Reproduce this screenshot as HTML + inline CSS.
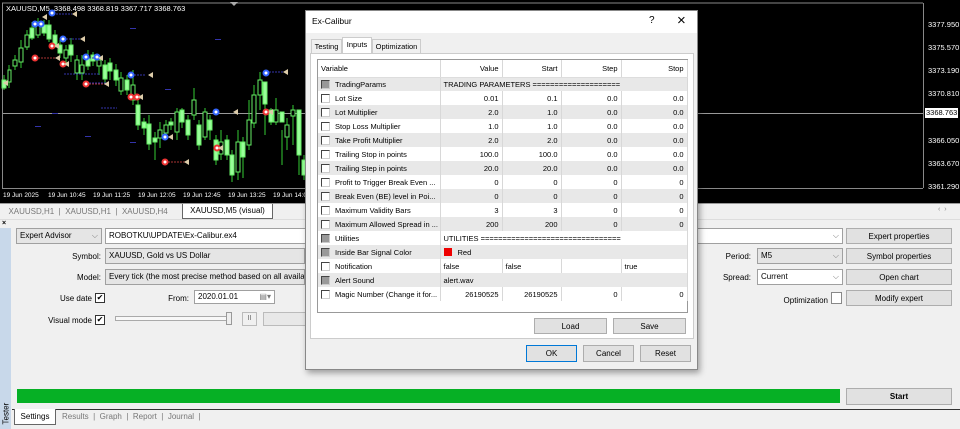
<!DOCTYPE html>
<html><head><meta charset="utf-8"><style>
*{margin:0;padding:0;box-sizing:border-box}
body{width:960px;height:429px;overflow:hidden;background:#f0f0f0;font-family:"Liberation Sans",sans-serif;font-size:8px;color:#000;position:relative}
.a{position:absolute}
.w{color:#fff}
.box{position:absolute;border:1px solid #a0a0a0;background:#fff;padding:2px 3px;white-space:nowrap;overflow:hidden}
.btn{position:absolute;border:1px solid #adadad;background:#e1e1e1;text-align:center;line-height:15px}
.cb{position:absolute;width:10px;height:10px;border:1px solid #333;background:#fff;font-size:8px;line-height:8px;text-align:center}
.lbl{position:absolute;text-align:right;white-space:nowrap}
table{border-collapse:collapse;position:absolute;left:318px;top:60px;width:369px;table-layout:fixed}
td{height:14px;border-right:1px solid #d8d8d8;padding:0 3px;white-space:nowrap;overflow:hidden;font-size:7.5px;line-height:13px}
td.r{text-align:right}
tr.g td{background:#e8e8e8}
.ck{display:inline-block;width:9px;height:9px;border:1px solid #444;border-right-color:#ccc;border-bottom-color:#ccc;vertical-align:-2px;margin-right:5px;background:#fff}
.ck.d{background:#999}
.px{position:absolute;left:928px;color:#fff;font-size:7.5px;line-height:9px}
.tx{position:absolute;top:192px;color:#fff;font-size:6.5px;white-space:nowrap}
</style></head><body>
<div class="a" style="left:0;top:0;width:960px;height:203px;background:#000"></div>
<svg class="a" style="left:0;top:0" width="960" height="203">
<line x1="2" y1="3" x2="923" y2="3" stroke="#888"/>
<line x1="2.5" y1="3" x2="2.5" y2="188" stroke="#888"/>
<line x1="923.5" y1="3" x2="923.5" y2="188" stroke="#888"/>
<line x1="2" y1="188.5" x2="923" y2="188.5" stroke="#888"/>
<line x1="3" y1="113.5" x2="923" y2="113.5" stroke="#999"/>
<g stroke="#3c3" stroke-width="1">
<path d="M4 75V90M9 65V88M15 55V70M21 40V68M27 30V50M32 22V40M38 18V38M44 20V36M49 20V42M55 30V48M60 40V58M66 45V65M71 38V62M77 55V80M82 55V80M88 50V70M93 52V66M99 55V75M105 60V83M110 58V80M116 64V86M121 72V95M127 75V95M133 70V105M138 100V130M144 118V135M149 115V150M155 132V160M160 122V148M166 120V140M171 118V130M177 108V140M182 108V128M188 115V140M194 88V120M199 120V150M205 108V140M210 115V140M216 135V165M221 130V160M227 135V160M232 150V182M238 130V180M243 137V178M249 100V150M254 85V128M260 72V110M265 100V135M271 108V125M276 98V125M282 130V165M287 118V150M293 105V145M299 130V175M304 155V180"/>
</g>
<g fill="#9f9" stroke="#6e6">
<rect x="2" y="80" width="4" height="8"/><rect x="8" y="70" width="3" height="12" fill="#000"/><rect x="13" y="60" width="4" height="6" fill="#000"/><rect x="19" y="48" width="4" height="14" fill="#000"/><rect x="25" y="35" width="4" height="12" fill="#000"/><rect x="30" y="28" width="4" height="10"/><rect x="36" y="23" width="4" height="12" fill="#000"/><rect x="42" y="25" width="4" height="8"/><rect x="47" y="25" width="4" height="14"/><rect x="53" y="35" width="4" height="10"/><rect x="58" y="45" width="4" height="8"/><rect x="64" y="50" width="4" height="8" fill="#000"/><rect x="69" y="45" width="4" height="10"/><rect x="75" y="60" width="4" height="13" fill="#000"/><rect x="80" y="65" width="4" height="8" fill="#000"/><rect x="86" y="58" width="4" height="8"/><rect x="91" y="55" width="4" height="6"/><rect x="97" y="60" width="4" height="6" fill="#000"/><rect x="103" y="65" width="4" height="14"/><rect x="108" y="63" width="4" height="8"/><rect x="114" y="70" width="4" height="10"/><rect x="119" y="78" width="4" height="13" fill="#000"/><rect x="125" y="80" width="4" height="10"/><rect x="131" y="85" width="4" height="15" fill="#000"/><rect x="136" y="105" width="4" height="20"/><rect x="142" y="122" width="4" height="6"/><rect x="147" y="124" width="4" height="20"/><rect x="153" y="138" width="4" height="4"/><rect x="158" y="130" width="4" height="8" fill="#000"/><rect x="164" y="125" width="4" height="8" fill="#000"/><rect x="169" y="122" width="4" height="3"/><rect x="175" y="112" width="4" height="20" fill="#000"/><rect x="180" y="110" width="4" height="12"/><rect x="186" y="120" width="4" height="15"/><rect x="192" y="100" width="4" height="15" fill="#000"/><rect x="197" y="125" width="4" height="20"/><rect x="203" y="112" width="4" height="25" fill="#000"/><rect x="208" y="120" width="4" height="10"/><rect x="214" y="140" width="4" height="20"/><rect x="219" y="142" width="4" height="12" fill="#000"/><rect x="225" y="140" width="4" height="15"/><rect x="230" y="155" width="4" height="20"/><rect x="236" y="142" width="4" height="30" fill="#000"/><rect x="241" y="142" width="4" height="15"/><rect x="247" y="120" width="4" height="25" fill="#000"/><rect x="252" y="95" width="4" height="28" fill="#000"/><rect x="258" y="80" width="4" height="15" fill="#000"/><rect x="263" y="82" width="4" height="22"/><rect x="269" y="110" width="4" height="12"/><rect x="274" y="110" width="4" height="12" fill="#000"/><rect x="280" y="112" width="4" height="10"/><rect x="285" y="125" width="4" height="12" fill="#000"/><rect x="291" y="110" width="4" height="6" fill="#000"/><rect x="297" y="110" width="4" height="45"/><rect x="302" y="160" width="4" height="15"/>
</g>
<g fill="none" stroke-dasharray="2,1">
<path d="M53 14H72M63 39H84M86 58H98M131 75H146M64 74H100M86 83H106M101 108H117M263 72H286" stroke="#33a"/>
<path d="M35 58H56M86 84H106M165 162H186" stroke="#a33"/>
</g>
<g fill="#fff" stroke="#36f" stroke-width="2"><circle cx="35" cy="24" r="2.5"/><circle cx="41" cy="24" r="2.5"/><circle cx="52" cy="13" r="2.5"/><circle cx="63" cy="39" r="2.5"/><circle cx="86" cy="57" r="2.5"/><circle cx="97" cy="57" r="2.5"/><circle cx="131" cy="75" r="2.5"/><circle cx="165" cy="137" r="2.5"/><circle cx="216" cy="112" r="2.5"/><circle cx="266" cy="73" r="2.5"/></g>
<g fill="#fff" stroke="#e33" stroke-width="2"><circle cx="35" cy="58" r="2.5"/><circle cx="52" cy="46" r="2.5"/><circle cx="63" cy="64" r="2.5"/><circle cx="86" cy="84" r="2.5"/><circle cx="131" cy="97" r="2.5"/><circle cx="137" cy="97" r="2.5"/><circle cx="165" cy="162" r="2.5"/><circle cx="217" cy="148" r="2.5"/><circle cx="266" cy="112" r="2.5"/></g>
<g fill="#dca"><path d="M42 17l5-3v6zM72 14l5-3v6zM80 39l5-3v6zM98 58l5-3v6zM54 46l5-3v6zM55 58l5-3v6zM64 64l5-3v6zM104 84l5-3v6zM148 75l5-3v6zM138 97l5-3v6zM3 83l5-3v6zM168 137l5-3v6zM184 162l5-3v6zM233 112l5-3v6zM218 148l5-3v6zM283 72l5-3v6zM268 112l5-3v6z"/></g>
<g fill="#33a"><rect x="130" y="28" width="6" height="1"/><rect x="215" y="39" width="6" height="1"/><rect x="165" y="89" width="6" height="1"/><rect x="52" y="113" width="6" height="1"/><rect x="35" y="126" width="6" height="1"/><rect x="85" y="136" width="6" height="1"/><rect x="130" y="142" width="6" height="1"/></g>
<path d="M44 0l4 4 4-4" fill="#aaa" transform="translate(186,2)"/>
</svg>
<div class="a w" style="left:6px;top:4px;font-size:7.5px;white-space:nowrap">XAUUSD,M5 &nbsp;3368.498 3368.819 3367.717 3368.763</div>
<div class="px" style="top:20px">3377.950</div>
<div class="px" style="top:43px">3375.570</div>
<div class="px" style="top:66px">3373.190</div>
<div class="px" style="top:89px">3370.810</div>
<div class="a" style="left:925px;top:108px;font-size:7.5px;background:#fff;padding:0 1px;line-height:10px">3368.763</div>
<div class="px" style="top:136px">3366.050</div>
<div class="px" style="top:159px">3363.670</div>
<div class="px" style="top:182px">3361.290</div>
<div class="tx" style="left:3px">19 Jun 2025</div>
<div class="tx" style="left:48px">19 Jun 10:45</div>
<div class="tx" style="left:93px">19 Jun 11:25</div>
<div class="tx" style="left:138px">19 Jun 12:05</div>
<div class="tx" style="left:183px">19 Jun 12:45</div>
<div class="tx" style="left:228px">19 Jun 13:25</div>
<div class="tx" style="left:273px">19 Jun 14:05</div>

<div class="a" style="left:0;top:203px;width:960px;height:1px;background:#999"></div>
<div class="a" style="left:4px;top:207px;color:#777;white-space:nowrap">&nbsp;&nbsp;XAUUSD,H1 &nbsp;| &nbsp;XAUUSD,H1 &nbsp;| &nbsp;XAUUSD,H4</div>
<div class="a" style="left:182px;top:204px;width:91px;height:15px;background:#fff;border:1px solid #666;border-top:none;text-align:center;line-height:13px">XAUUSD,M5 (visual)</div>
<div class="a" style="left:938px;top:206px;color:#888;font-size:7px">‹ &nbsp;›</div>
<div class="a" style="left:0;top:219px;width:960px;height:1px;background:#ddd"></div>
<div class="a" style="left:2px;top:220px;font-size:7px;font-weight:bold">×</div>
<div class="a" style="left:0;top:228px;width:11px;height:201px;background:#c8d8ea"></div>
<div class="a" style="left:-6px;top:408px;transform:rotate(-90deg);font-size:8px;width:24px">Tester</div>

<div class="box" style="left:16px;top:228px;width:86px;height:16px;background:#e5e5e5">Expert Advisor<span style="float:right;color:#777">⌵</span></div>
<div class="box" style="left:105px;top:228px;width:738px;height:16px">ROBOTKU\UPDATE\Ex-Calibur.ex4<span style="float:right;color:#777">⌵</span></div>
<div class="btn" style="left:846px;top:228px;width:106px;height:16px">Expert properties</div>
<div class="lbl" style="left:40px;top:252px;width:61px">Symbol:</div>
<div class="box" style="left:105px;top:248px;width:200px;height:16px;background:#e5e5e5">XAUUSD, Gold vs US Dollar</div>
<div class="lbl" style="left:700px;top:252px;width:51px">Period:</div>
<div class="box" style="left:757px;top:248px;width:86px;height:16px;background:#e5e5e5">M5<span style="float:right;color:#777">⌵</span></div>
<div class="btn" style="left:846px;top:248px;width:106px;height:16px">Symbol properties</div>
<div class="lbl" style="left:40px;top:273px;width:61px">Model:</div>
<div class="box" style="left:105px;top:269px;width:200px;height:16px;background:#e5e5e5">Every tick (the most precise method based on all available le</div>
<div class="lbl" style="left:700px;top:273px;width:51px">Spread:</div>
<div class="box" style="left:757px;top:269px;width:86px;height:16px">Current<span style="float:right;color:#777">⌵</span></div>
<div class="btn" style="left:846px;top:269px;width:106px;height:16px">Open chart</div>
<div class="lbl" style="left:40px;top:294px;width:52px">Use date</div>
<div class="cb" style="left:95px;top:293px">✔</div>
<div class="lbl" style="left:150px;top:294px;width:39px">From:</div>
<div class="box" style="left:194px;top:290px;width:81px;height:14px;padding:1px 3px">2020.01.01<span style="float:right;color:#777">▤▾</span></div>
<div class="lbl" style="left:760px;top:296px;width:68px">Optimization</div>
<div class="cb" style="left:831px;top:292px;width:11px;height:12px;border-color:#888"></div>
<div class="btn" style="left:846px;top:290px;width:106px;height:16px">Modify expert</div>
<div class="lbl" style="left:30px;top:316px;width:62px">Visual mode</div>
<div class="cb" style="left:95px;top:315px">✔</div>
<div class="a" style="left:115px;top:316px;width:115px;height:5px;border:1px solid #aaa;background:#f8f8f8"></div>
<div class="a" style="left:226px;top:312px;width:6px;height:13px;border:1px solid #999;background:#eee"></div>
<div class="a" style="left:242px;top:312px;width:15px;height:14px;border:1px solid #bbb;font-size:7px;text-align:center;line-height:12px;color:#666">II</div>
<div class="a" style="left:263px;top:312px;width:45px;height:14px;border:1px solid #bbb;background:#e8e8e8"></div>
<div class="a" style="left:17px;top:389px;width:823px;height:14px;background:#06b025"></div>
<div class="btn" style="left:846px;top:388px;width:106px;height:17px;font-weight:bold">Start</div>
<div class="a" style="left:12px;top:409px;width:948px;height:1px;background:#333"></div>
<div class="a" style="left:14px;top:409px;width:42px;height:16px;background:#fff;border:1px solid #666;border-top:none;text-align:center;line-height:15px">Settings</div>
<div class="a" style="left:62px;top:412px;color:#777;white-space:nowrap">Results &nbsp;| &nbsp;Graph &nbsp;| &nbsp;Report &nbsp;| &nbsp;Journal &nbsp;|</div>

<div class="a" style="left:305px;top:10px;width:393px;height:360px;background:#f0f0f0;border:1px solid #888;box-shadow:2px 3px 6px rgba(0,0,0,.35)"></div>
<div class="a" style="left:306px;top:11px;width:391px;height:22px;background:#fff"></div>
<div class="a" style="left:312px;top:16px;font-size:8.5px">Ex-Calibur</div>
<div class="a" style="left:649px;top:15px;font-size:10px">?</div>
<div class="a" style="left:677px;top:12px;font-size:15px;font-weight:300">×</div>
<div class="a" style="left:311px;top:39px;width:31px;height:14px;border:1px solid #ccc;border-bottom:none;text-align:center;line-height:13px;font-size:7.5px">Testing</div>
<div class="a" style="left:342px;top:37px;width:30px;height:17px;background:#fff;border:1px solid #ccc;border-bottom:none;text-align:center;line-height:14px;font-size:7.5px">Inputs</div>
<div class="a" style="left:372px;top:39px;width:49px;height:14px;border:1px solid #ccc;border-bottom:none;text-align:center;line-height:13px;font-size:7.5px">Optimization</div>
<div class="a" style="left:310px;top:53px;width:384px;height:286px;background:#fff;border:1px solid #ccc"></div>
<div class="a" style="left:317px;top:59px;width:371px;height:254px;background:#fff;border:1px solid #999"></div>
<table>
<colgroup><col style="width:122px"><col style="width:62px"><col style="width:59px"><col style="width:60px"><col style="width:66px"></colgroup>
<tr><td style="height:17px;border-bottom:1px solid #ddd">Variable</td><td class="r" style="border-bottom:1px solid #ddd">Value</td><td class="r" style="border-bottom:1px solid #ddd">Start</td><td class="r" style="border-bottom:1px solid #ddd">Step</td><td class="r" style="border-bottom:1px solid #ddd">Stop</td></tr>
<tr class="g"><td><span class="ck d"></span>TradingParams</td><td colspan="4">TRADING PARAMETERS ====================</td></tr>
<tr><td><span class="ck"></span>Lot Size</td><td class="r">0.01</td><td class="r">0.1</td><td class="r">0.0</td><td class="r">0.0</td></tr>
<tr class="g"><td><span class="ck"></span>Lot Multiplier</td><td class="r">2.0</td><td class="r">1.0</td><td class="r">0.0</td><td class="r">0.0</td></tr>
<tr><td><span class="ck"></span>Stop Loss Multiplier</td><td class="r">1.0</td><td class="r">1.0</td><td class="r">0.0</td><td class="r">0.0</td></tr>
<tr class="g"><td><span class="ck"></span>Take Profit Multiplier</td><td class="r">2.0</td><td class="r">2.0</td><td class="r">0.0</td><td class="r">0.0</td></tr>
<tr><td><span class="ck"></span>Trailing Stop in points</td><td class="r">100.0</td><td class="r">100.0</td><td class="r">0.0</td><td class="r">0.0</td></tr>
<tr class="g"><td><span class="ck"></span>Trailing Step in points</td><td class="r">20.0</td><td class="r">20.0</td><td class="r">0.0</td><td class="r">0.0</td></tr>
<tr><td><span class="ck"></span>Profit to Trigger Break Even ...</td><td class="r">0</td><td class="r">0</td><td class="r">0</td><td class="r">0</td></tr>
<tr class="g"><td><span class="ck"></span>Break Even (BE) level in Poi...</td><td class="r">0</td><td class="r">0</td><td class="r">0</td><td class="r">0</td></tr>
<tr><td><span class="ck"></span>Maximum Validity Bars</td><td class="r">3</td><td class="r">3</td><td class="r">0</td><td class="r">0</td></tr>
<tr class="g"><td><span class="ck"></span>Maximum Allowed Spread in ...</td><td class="r">200</td><td class="r">200</td><td class="r">0</td><td class="r">0</td></tr>
<tr><td><span class="ck d"></span>Utilities</td><td colspan="4">UTILITIES ================================</td></tr>
<tr class="g"><td><span class="ck d"></span>Inside Bar Signal Color</td><td colspan="4"><span style="display:inline-block;width:8px;height:8px;background:#e00;vertical-align:-1px;margin-right:6px"></span>Red</td></tr>
<tr><td><span class="ck"></span>Notification</td><td>false</td><td>false</td><td></td><td>true</td></tr>
<tr class="g"><td><span class="ck d"></span>Alert Sound</td><td colspan="4">alert.wav</td></tr>
<tr><td><span class="ck"></span>Magic Number (Change it for...</td><td class="r">26190525</td><td class="r">26190525</td><td class="r">0</td><td class="r">0</td></tr>
</table>
<div class="btn" style="left:534px;top:318px;width:73px;height:16px">Load</div>
<div class="btn" style="left:613px;top:318px;width:73px;height:16px">Save</div>
<div class="btn" style="left:526px;top:345px;width:51px;height:17px;border:1px solid #0078d7">OK</div>
<div class="btn" style="left:583px;top:345px;width:51px;height:17px">Cancel</div>
<div class="btn" style="left:640px;top:345px;width:51px;height:17px">Reset</div>
</body></html>
